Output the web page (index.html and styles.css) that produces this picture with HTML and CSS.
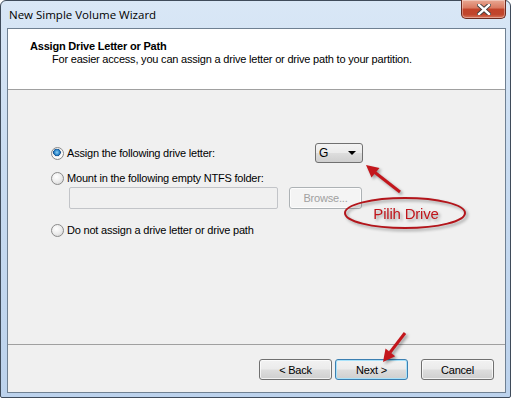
FILE: index.html
```html
<!DOCTYPE html>
<html lang="en">
<head>
    <meta charset="UTF-8">
    <meta name="viewport" content="width=device-width, initial-scale=1.0">
    <title>New Simple Volume Wizard</title>
    <link rel="stylesheet" href="styles.css">
</head>
<body>
    <div class="screen">
        <div class="window">
            <div class="titlebar">
                <span class="title">New Simple Volume Wizard</span>
                <button class="close-btn">
                    <svg width="14" height="11" viewBox="0 0 14 11">
                        <path d="M2 1 L12 10 M12 1 L2 10" stroke="#3a3a3a" stroke-width="4.2" stroke-linecap="square"/>
                        <path d="M2 1 L12 10 M12 1 L2 10" stroke="#ffffff" stroke-width="2.4" stroke-linecap="square"/>
                    </svg>
                </button>
            </div>
            <div class="client">
                <div class="header">
                    <h1>Assign Drive Letter or Path</h1>
                    <p>For easier access, you can assign a drive letter or drive path to your partition.</p>
                </div>
                <div class="content">
                    <div class="option-row">
                        <label class="option"><span class="radio checked"></span>Assign the following drive letter:</label>
                        <div class="combo"><span>G</span><span class="caret"></span></div>
                    </div>
                    <label class="option second"><span class="radio"></span>Mount in the following empty NTFS folder:</label>
                    <div class="folder-row">
                        <div class="textbox"></div>
                        <button class="btn browse" disabled>Browse...</button>
                    </div>
                    <label class="option third"><span class="radio"></span>Do not assign a drive letter or drive path</label>
                </div>
                <div class="footer">
                    <button class="btn">&lt; Back</button>
                    <button class="btn default">Next &gt;</button>
                    <button class="btn cancel">Cancel</button>
                </div>
            </div>
        </div>

        <!-- annotations drawn over the screenshot -->
        <svg class="notes" width="513" height="399" viewBox="0 0 513 399">
            <g class="shadowed">
                <ellipse cx="405" cy="213" rx="60" ry="15" fill="none" stroke="#b3151b" stroke-width="2"/>
                <text x="406" y="219" text-anchor="middle" class="note-text">Pilih Drive</text>
                <line x1="400" y1="192" x2="375" y2="172.5" stroke="#c3161c" stroke-width="3"/>
                <polygon points="366,165 379.5,168 371.5,177.5" fill="#c3161c"/>
                <line x1="405" y1="333" x2="390" y2="352.5" stroke="#c3161c" stroke-width="3"/>
                <polygon points="383,362 385.5,348.5 395.2,356.2" fill="#c3161c"/>
            </g>
        </svg>
    </div>
</body>
</html>
```

FILE: styles.css
```css
body {
    margin: 0;
    background-color: white;
    font-family: "Liberation Sans", Arial, sans-serif;
    font-size: 11px;
    letter-spacing: -0.2px;
    color: black;
}
.screen {
    position: relative;
    width: 513px;
    height: 399px;
}
.window {
    width: 509px;
    height: 396px;
    border: 1px solid #3f4b5a;
    border-radius: 6px 6px 2px 2px;
    background: linear-gradient(to bottom, #d9e7f6 0%, #c9dcf1 40%, #bcd2ec 100%);
    display: flex;
    flex-direction: column;
}
.titlebar {
    height: 27px;
    display: flex;
    justify-content: space-between;
    align-items: flex-start;
    flex-shrink: 0;
}
.title {
    font-family: "Open Sans", "Noto Sans", sans-serif;
    font-size: 11.5px;
    letter-spacing: 0;
    line-height: 16px;
    padding: 6px 0 0 8px;
}
.close-btn {
    width: 45px;
    height: 19px;
    margin: -1px 4px 0 0;
    padding: 0;
    border: 1px solid #6b2a1f;
    border-top: none;
    border-radius: 0 0 5px 5px;
    background: linear-gradient(to bottom, #e9a893 0%, #d9785f 45%, #c2432a 50%, #c0452c 80%, #d8745a 100%);
    display: flex;
    justify-content: center;
    align-items: center;
    box-shadow: inset 0 0 0 1px rgba(255,255,255,0.35);
}
.client {
    flex: 1;
    margin: 0 4px 4px 6px;
    border: 1px solid #6f8092;
    background-color: #f0f0f0;
    display: flex;
    flex-direction: column;
}
.header {
    height: 61px;
    box-sizing: border-box;
    background-color: white;
    border-bottom: 1px solid #a0a0a0;
    padding: 11px 0 0 22px;
}
h1 {
    margin: 0;
    font-size: 11px;
    line-height: 13px;
    font-weight: bold;
}
.header p {
    margin: 0 0 0 22px;
    line-height: 13px;
}
.content {
    flex: 1;
    padding: 53px 0 0 43px;
    display: flex;
    flex-direction: column;
    align-items: flex-start;
}
.option-row {
    display: flex;
    align-items: center;
    height: 20px;
}
.option-row .option {
    width: 264px;
}
.option {
    display: flex;
    align-items: center;
    height: 14px;
    white-space: nowrap;
}
.option.second {
    margin-top: 8px;
}
.option.third {
    margin-top: 14px;
}
.radio {
    width: 11px;
    height: 11px;
    border: 1px solid #8a8a8a;
    border-radius: 50%;
    background: radial-gradient(circle at 40% 35%, #ffffff 0%, #ececec 50%, #cfcfcf 100%);
    margin-right: 3px;
    flex-shrink: 0;
}
.radio.checked {
    background: radial-gradient(circle at 45% 40%, #8ed0f6 0%, #2a86c9 28%, #17508e 40%, #e6e6e6 44%, #ffffff 60%, #d6d6d6 100%);
}
.combo {
    width: 37px;
    height: 18px;
    border: 1px solid #707070;
    border-radius: 3px;
    background: linear-gradient(to bottom, #f3f3f3 0%, #ebebeb 48%, #dddddd 52%, #cfcfcf 100%);
    display: flex;
    justify-content: space-between;
    align-items: center;
    padding: 0 6px 0 3px;
    font-size: 12px;
}
.caret {
    width: 0;
    height: 0;
    border-left: 4px solid transparent;
    border-right: 4px solid transparent;
    border-top: 4px solid black;
}
.folder-row {
    display: flex;
    margin: 2px 0 0 18px;
    gap: 11px;
}
.textbox {
    width: 207px;
    height: 20px;
    border: 1px solid #c2c4c8;
    border-radius: 2px;
    background-color: #f0f0f0;
}
.btn {
    width: 73px;
    height: 21px;
    padding: 0;
    border: 1px solid #707070;
    border-radius: 3px;
    background: linear-gradient(to bottom, #f2f2f2 0%, #ebebeb 48%, #dddddd 52%, #cfcfcf 100%);
    font-family: "Liberation Sans", Arial, sans-serif;
    font-size: 11px;
    letter-spacing: -0.2px;
    color: black;
    box-shadow: inset 0 0 0 1px rgba(255,255,255,0.7);
}
.btn.browse {
    height: 22px;
    border-color: #adb2b5;
    background: #f4f4f4;
    color: #a0a0a0;
}
.btn.default {
    border-color: #3c7fb1;
    box-shadow: inset 0 0 0 1px #a8e2fa;
}
.footer {
    height: 48px;
    box-sizing: border-box;
    flex-shrink: 0;
    border-top: 1px solid #a0a0a0;
    display: flex;
    justify-content: flex-end;
    align-items: flex-start;
    gap: 3px;
    padding: 14px 11px 0 0;
}
.btn.cancel {
    margin-left: 10px;
}
.notes {
    position: absolute;
    top: 0;
    left: 0;
    pointer-events: none;
}
.shadowed {
    filter: drop-shadow(2px 2px 1.5px rgba(0,0,0,0.35));
}
.note-text {
    font-family: "Liberation Sans", Arial, sans-serif;
    font-size: 15px;
    fill: #c0151b;
}
```
